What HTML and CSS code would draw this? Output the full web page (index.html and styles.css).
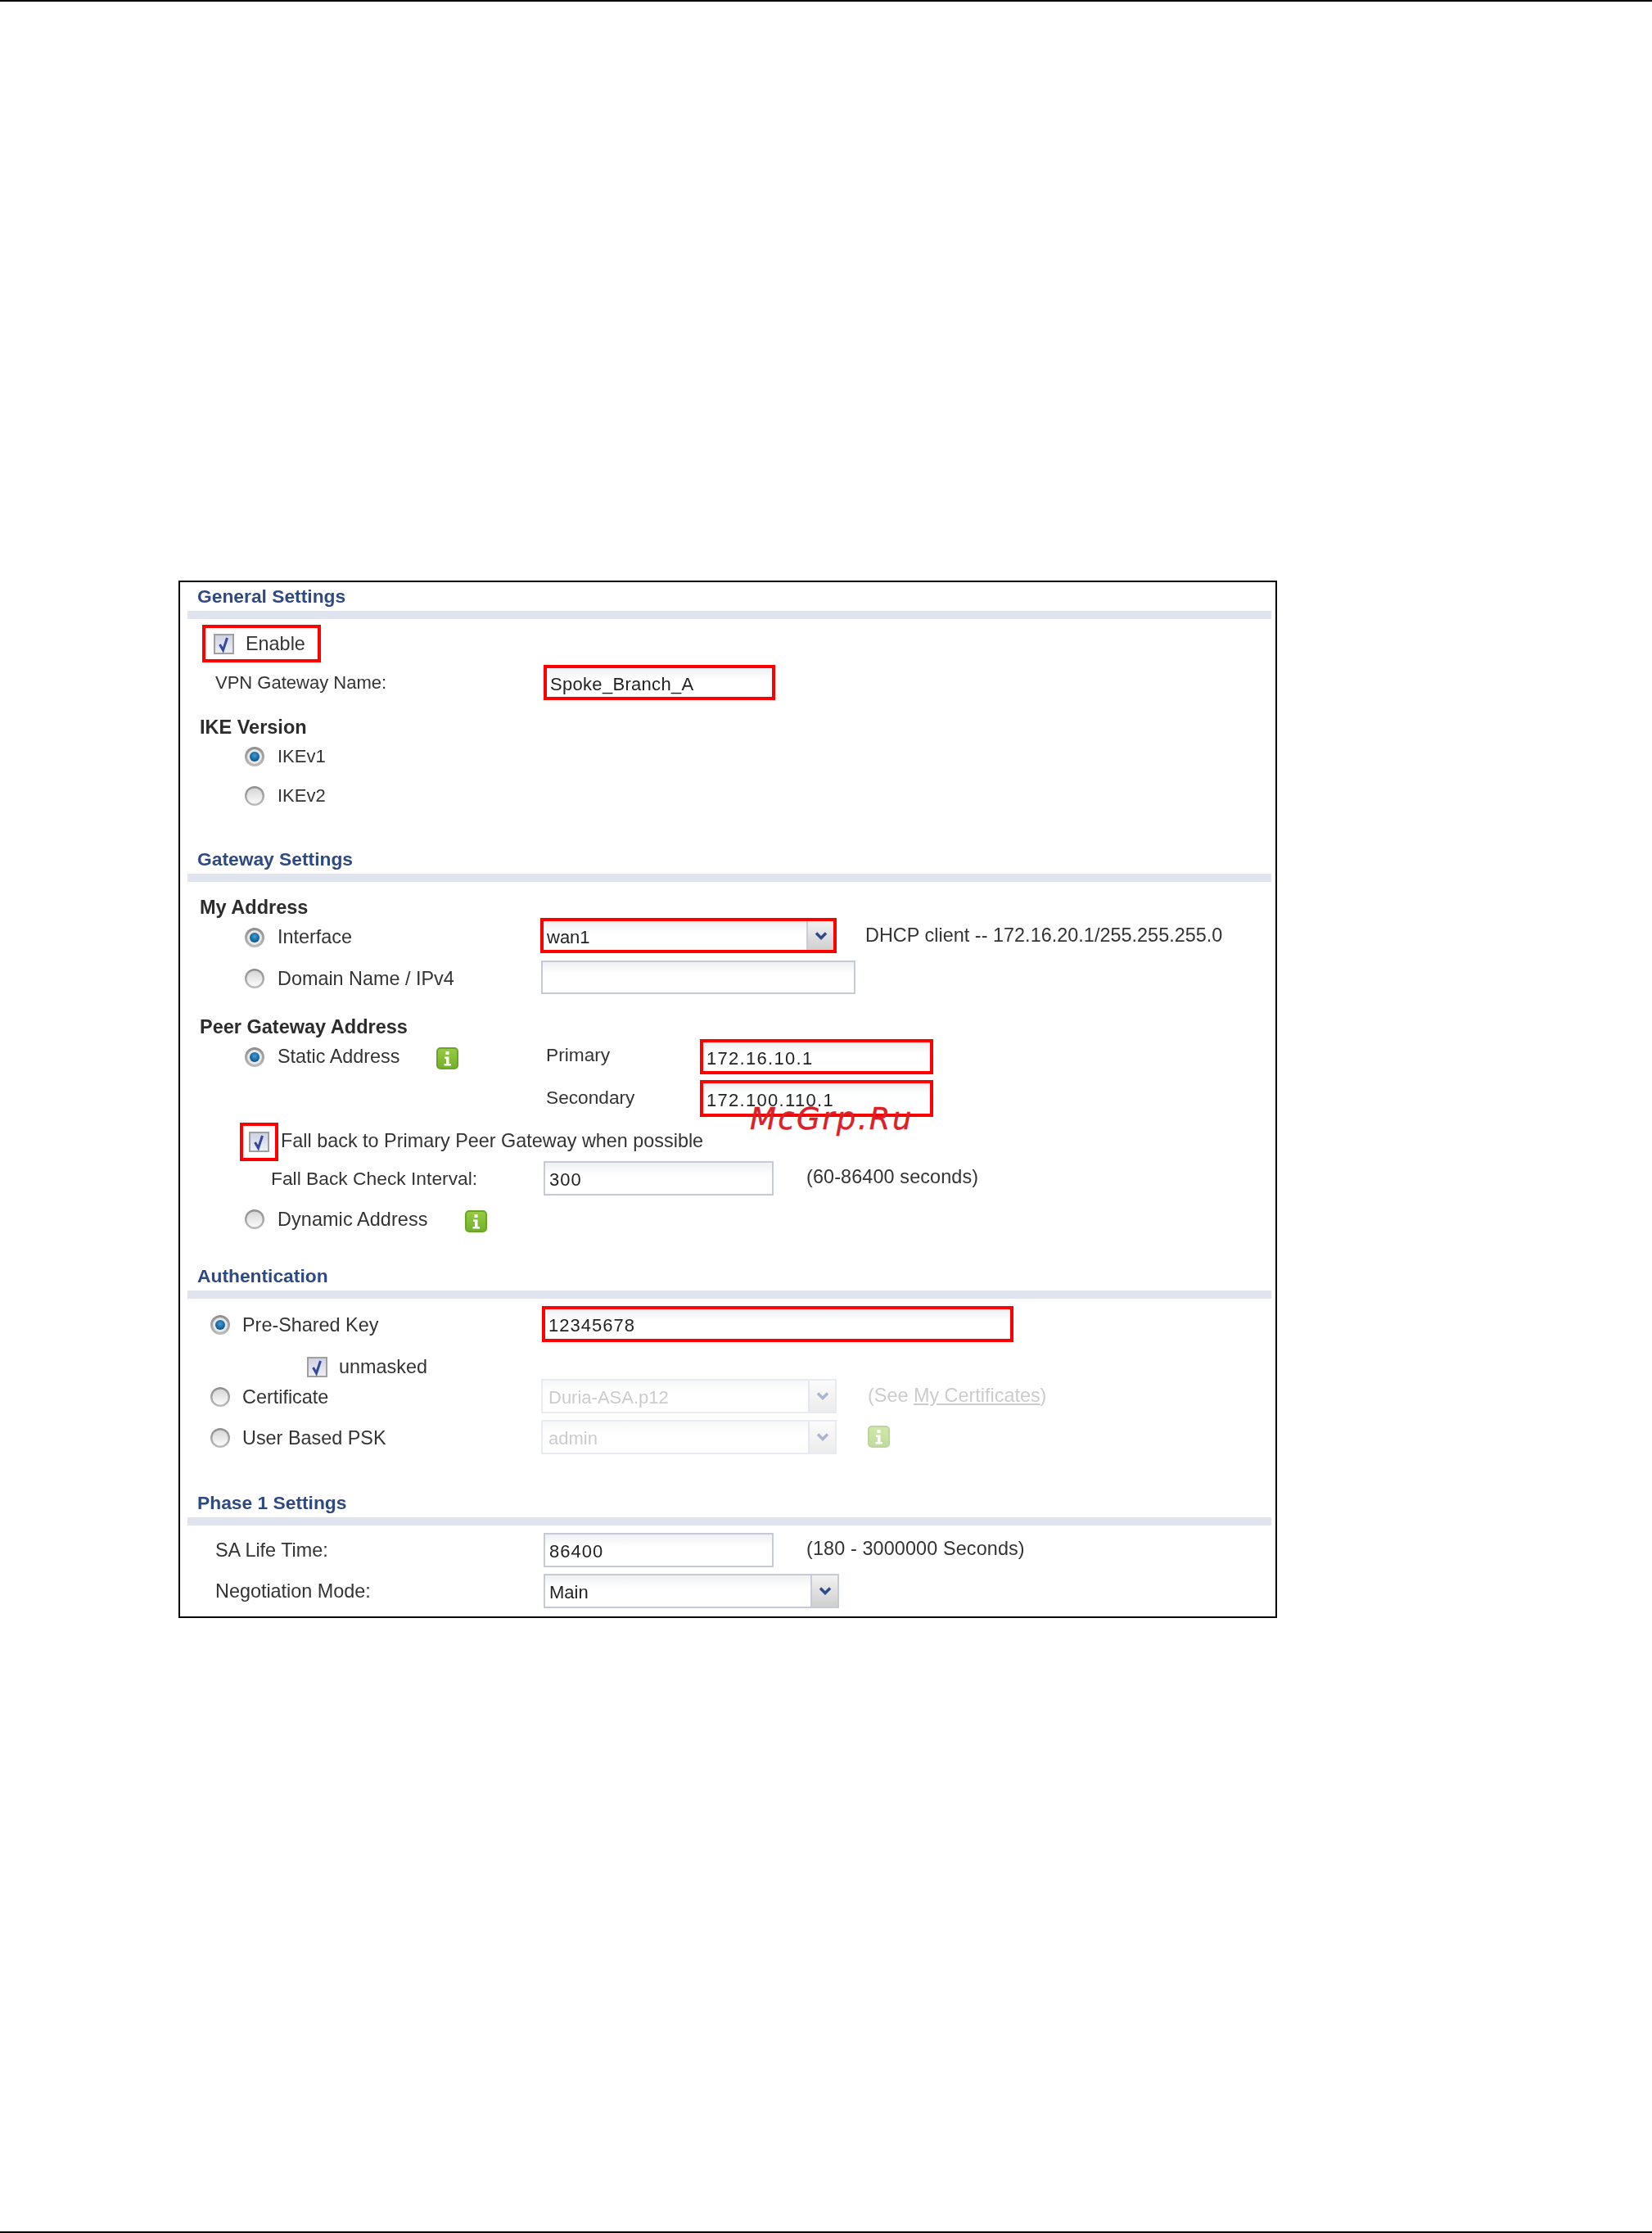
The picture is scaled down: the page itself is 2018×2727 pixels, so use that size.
FILE: index.html
```html
<!DOCTYPE html>
<html lang="en">
<head>
<meta charset="utf-8">
<title>VPN Gateway</title>
<link rel="stylesheet" href="styles.css">
</head>
<body>
<svg class="defs" width="0" height="0" aria-hidden="true">
  <defs>
    <linearGradient id="ringG" x1="0" y1="0" x2="0" y2="1"><stop offset="0" stop-color="#8e8e8e"/><stop offset="1" stop-color="#bcbcbc"/></linearGradient>
    <linearGradient id="faceG" x1="0" y1="0" x2="0" y2="1"><stop offset="0" stop-color="#d6d6d6"/><stop offset="1" stop-color="#fbfbfb"/></linearGradient>
    <radialGradient id="dotG" cx=".5" cy=".4" r=".6"><stop offset="0" stop-color="#3aa2dc"/><stop offset="1" stop-color="#0d4f83"/></radialGradient>
    <linearGradient id="boxG" x1="0" y1="0" x2="0" y2="1"><stop offset="0" stop-color="#cdd1e2"/><stop offset="1" stop-color="#eef0f6"/></linearGradient>
    <linearGradient id="infoG" x1="0" y1="0" x2="0" y2="1"><stop offset="0" stop-color="#98cc44"/><stop offset="1" stop-color="#72b02a"/></linearGradient>
    <symbol id="radio-on" viewBox="0 0 24 24"><circle cx="12" cy="12" r="12" fill="url(#ringG)"/><circle cx="12" cy="12" r="9" fill="#e8e8ea"/><circle cx="12" cy="12" r="6" fill="url(#dotG)"/></symbol>
    <symbol id="radio-off" viewBox="0 0 24 24"><circle cx="12" cy="12" r="12" fill="url(#ringG)"/><circle cx="12" cy="12" r="9.6" fill="url(#faceG)"/></symbol>
    <symbol id="check" viewBox="0 0 25 25"><rect x="1" y="1" width="23" height="23" fill="url(#boxG)" stroke="#a0a0a0" stroke-width="2"/><path d="M7.5 13l4 7L16.5 5" fill="none" stroke="#34489c" stroke-width="3"/></symbol>
    <symbol id="info" viewBox="0 0 27 27"><rect x="1" y="1" width="25" height="25" rx="4" fill="url(#infoG)" stroke="#6ba526" stroke-width="2"/><rect x="11.5" y="5" width="4" height="4" fill="#fff"/><path d="M10 11.5h5.5V20H18v2.5H9.5V20H12v-6h-2z" fill="#fff"/></symbol>
    <symbol id="chev" viewBox="0 0 16 12"><path d="M2 2.5l6 6 6-6" fill="none" stroke="currentColor" stroke-width="3.4"/></symbol>
  </defs>
</svg>
<main class="page">
  <div class="frame">
    <div class="soft">
      <section class="sec first">
        <h2 class="head">General Settings</h2>
        <div class="bar"></div>
        <div class="single r-enable">
          <div class="redbox enable"><svg class="chk"><use href="#check"/></svg><span class="txt s-en">Enable</span></div>
        </div>
        <div class="row r-vpn">
          <div class="c1 i43"><span class="txt s-lab">VPN Gateway Name:</span></div>
          <div class="c2"><div class="field hl low w283 at4"><span class="val s-vpn">Spoke_Branch_A</span></div></div>
        </div>
        <h3 class="sub r-ike">IKE Version</h3>
        <div class="single r-v1 i79"><svg class="rad"><use href="#radio-on"/></svg><span class="txt s-ike">IKEv1</span></div>
        <div class="single r-v2 i79"><svg class="rad"><use href="#radio-off"/></svg><span class="txt s-ike">IKEv2</span></div>
      </section>

      <section class="sec s-gw">
        <h2 class="head">Gateway Settings</h2>
        <div class="bar"></div>
        <h3 class="sub r-my">My Address</h3>
        <div class="row r-if">
          <div class="c1 i79 pad4"><svg class="rad"><use href="#radio-on"/></svg><span class="txt">Interface</span></div>
          <div class="c2">
            <div class="field select hl low w362"><span class="val">wan1</span><span class="arrow"><svg class="chv"><use href="#chev"/></svg></span></div>
            <span class="txt note-dhcp">DHCP client -- 172.16.20.1/255.255.255.0</span>
          </div>
        </div>
        <div class="row r-dom">
          <div class="c1 i79 pad3"><svg class="rad"><use href="#radio-off"/></svg><span class="txt">Domain Name / IPv4</span></div>
          <div class="c2"><div class="field plain w384 at1"></div></div>
        </div>
        <h3 class="sub r-peer">Peer Gateway Address</h3>
        <div class="row r-st">
          <div class="c1 i79"><svg class="rad"><use href="#radio-on"/></svg><span class="txt">Static Address</span><svg class="inf in-st"><use href="#info"/></svg></div>
          <div class="c2 pair"><span class="txt plab">Primary</span><div class="field hl low w285"><span class="val ip">172.16.10.1</span></div></div>
        </div>
        <div class="row r-sec">
          <div class="c1"></div>
          <div class="c2 pair"><span class="txt plab lab2">Secondary</span><div class="field hl low w285"><span class="val ip">172.100.110.1</span></div></div>
        </div>
        <div class="single r-fb">
          <div class="redbox fall"><svg class="chk"><use href="#check"/></svg></div>
          <span class="txt s-fb">Fall back to Primary Peer Gateway when possible</span>
        </div>
        <div class="row r-int">
          <div class="c1 i111"><span class="txt s-fbi">Fall Back Check Interval:</span></div>
          <div class="c2"><div class="field plain w281 at4"><span class="val num">300</span></div><span class="txt note-r">(60-86400 seconds)</span></div>
        </div>
        <div class="single r-dyn i79"><svg class="rad"><use href="#radio-off"/></svg><span class="txt s-dyn">Dynamic Address</span><svg class="inf in-dy"><use href="#info"/></svg></div>
      </section>

      <section class="sec s-auth">
        <h2 class="head">Authentication</h2>
        <div class="bar"></div>
        <div class="row r-psk">
          <div class="c1 i37 pad2"><svg class="rad rad15"><use href="#radio-on"/></svg><span class="txt">Pre-Shared Key</span></div>
          <div class="c2"><div class="field hl w576 at2"><span class="val num">12345678</span></div></div>
        </div>
        <div class="single r-un"><svg class="chk"><use href="#check"/></svg><span class="txt s-un">unmasked</span></div>
        <div class="row r-cert">
          <div class="c1 i37 pad2"><svg class="rad rad15"><use href="#radio-off"/></svg><span class="txt">Certificate</span></div>
          <div class="c2">
            <div class="field select off w361 at1"><span class="val">Duria-ASA.p12</span><span class="arrow"><svg class="chv"><use href="#chev"/></svg></span></div>
            <span class="txt dim note-see">(See <a class="lnk">My Certificates</a>)</span>
          </div>
        </div>
        <div class="row r-user">
          <div class="c1 i37 pad2"><svg class="rad rad15"><use href="#radio-off"/></svg><span class="txt">User Based PSK</span></div>
          <div class="c2">
            <div class="field select off w361 at1"><span class="val">admin</span><span class="arrow"><svg class="chv"><use href="#chev"/></svg></span></div>
            <svg class="inf faded"><use href="#info"/></svg>
          </div>
        </div>
      </section>

      <section class="sec s-ph">
        <h2 class="head">Phase 1 Settings</h2>
        <div class="bar"></div>
        <div class="row r-sa">
          <div class="c1 i43"><span class="txt">SA Life Time:</span></div>
          <div class="c2"><div class="field plain w281 at4"><span class="val num">86400</span></div><span class="txt note-r">(180 - 3000000 Seconds)</span></div>
        </div>
        <div class="row r-neg">
          <div class="c1 i43"><span class="txt">Negotiation Mode:</span></div>
          <div class="c2"><div class="field select plain w361 at4"><span class="val">Main</span><span class="arrow"><svg class="chv"><use href="#chev"/></svg></span></div></div>
        </div>
      </section>
    </div>
    <div class="mark">McGrp.Ru</div>
  </div>
</main>
</body>
</html>
```

FILE: styles.css
```css
* { box-sizing: border-box; }
html, body { margin: 0; background: #fff; }
.defs { display: block; height: 0; }
.page {
  height: 2727px;
  border-top: 2px solid #000;
  border-bottom: 2px solid #000;
  padding: 707px 0 0 218px;
  font-family: "Liberation Sans", Arial, sans-serif;
  font-size: 23.4px;
  color: #333;
}
.frame {
  position: relative;
  width: 1342px;
  border: 2px solid #000;
  padding-bottom: 10px;
}
.soft { filter: blur(.55px); }
.head {
  margin: 0;
  height: 35px;
  padding-left: 21px;
  display: flex;
  align-items: center;
  font-size: 22.8px;
  font-weight: 700;
  color: #2f4a82;
}
.bar { height: 10px; margin: 0 5px 0 9px; background: #e0e4ee; }
.sub {
  margin: 0;
  padding-left: 24px;
  display: flex;
  align-items: center;
  font-size: 23.5px;
  font-weight: 700;
  color: #2c2c2c;
}
.row {
  display: grid;
  grid-template-columns: 440px 1fr;
  grid-template-rows: 100%;
}
.single { display: flex; align-items: center; }
.c1, .c2 { display: flex; align-items: center; height: 100%; }
.txt { white-space: nowrap; }
.val { white-space: nowrap; color: #222; font-size: 22px; }
.num { letter-spacing: 1px; }
.ip { letter-spacing: 1.3px; }
.s-vpn { letter-spacing: .3px; }
.s-lab, .s-ike { font-size: 22px; }
.s-fbi { font-size: 22.8px; }
.s-dyn { letter-spacing: .1px; }
.rad { width: 24px; height: 24px; flex: none; margin-right: 16px; }
.rad15 { margin-right: 15px; }
.chk { width: 25px; height: 25px; flex: none; }
.inf { width: 27px; height: 27px; flex: none; }

.i37 { padding-left: 37px; }
.i43 { padding-left: 43px; }
.i79 { padding-left: 79px; }
.i111 { padding-left: 111px; }
.pad2 { padding-top: 2px; }
.pad3 { padding-top: 3px; }
.pad4 { padding-top: 4px; }

.field {
  height: 100%;
  display: flex;
  align-items: center;
  padding-top: 3px;
  flex: none;
}
.low { padding-top: 5px; }
.plain {
  border: 2px solid #c6c9d6;
  padding-left: 5px;
  background: linear-gradient(#eef0f2, #fff 40%);
}
.hl {
  border: 4px solid #f00;
  padding-left: 4px;
  background: linear-gradient(#eef0f2, #fff 40%);
}
.off {
  border: 2px solid #e9ebf2;
  padding-left: 7px;
  background: linear-gradient(#f6f7f8, #fff 40%);
}
.off .val { color: #ccc; }
.select { padding-right: 0; }
.arrow {
  margin-left: auto;
  align-self: stretch;
  margin-top: -3px;
  width: 33px;
  flex: none;
  display: flex;
  align-items: center;
  justify-content: center;
  border-left: 2px solid #c9ccd8;
  background: linear-gradient(#f2f2f2, #cfcfcf);
  color: #2c4a86;
}
.low .arrow { margin-top: -5px; }
.off .arrow {
  border-left-color: #e6e8ef;
  background: linear-gradient(#fbfbfb, #ececec);
  color: #a9b4cf;
}
.chv { width: 16px; height: 12px; }
.w281 { width: 281px; }
.w283 { width: 283px; }
.w285 { width: 285px; }
.w361 { width: 361px; }
.w362 { width: 362px; }
.w384 { width: 384px; }
.w576 { width: 576px; }
.at1 { margin-left: 1px; }
.at2 { margin-left: 2px; }
.at4 { margin-left: 4px; }

.sec.s-gw { margin-top: 45px; }
.sec.s-auth { margin-top: 37px; }
.sec.s-ph { margin-top: 42px; }

.r-enable { margin-top: 7px; padding-left: 27px; }
.redbox { border: 4px solid #f00; display: flex; align-items: center; }
.enable { width: 145px; height: 46px; padding-left: 10px; }
.s-en { margin-left: 14px; }
.r-vpn { margin-top: 3px; height: 43px; }
.r-ike { margin-top: 18px; height: 30px; }
.r-v1 { margin-top: 6px; height: 30px; }
.r-v2 { margin-top: 18px; height: 30px; }

.r-my { margin-top: 18px; height: 26px; }
.r-if { height: 43px; }
.note-dhcp { margin-left: 35px; letter-spacing: .03px; }
.r-dom { margin-top: 9px; height: 41px; }
.r-peer { margin-top: 26px; height: 29px; }
.r-st { height: 43px; }
.r-sec { margin-top: 7px; height: 45px; }
.pair { padding-left: 7px; }
.plab { width: 188px; margin-bottom: 4px; flex: none; font-size: 22.7px; }
.lab2 { margin-bottom: 2px; }
.in-st { margin-left: 44px; margin-top: 4px; }
.r-fb { margin-top: 7px; height: 47px; padding-left: 73px; }
.fall { width: 47px; height: 47px; padding-left: 7px; }
.s-fb { margin-left: 3px; margin-bottom: 3px; }
.r-int { height: 42px; }
.note-r { margin-left: 40px; margin-bottom: 4px; letter-spacing: .12px; }
.r-dyn { margin-top: 14px; height: 30px; }
.in-dy { margin-left: 45px; margin-top: 5px; }

.r-psk { margin-top: 9px; height: 44px; }
.r-un { margin-top: 16px; height: 28px; padding-left: 155px; }
.s-un { margin-left: 14px; }
.r-cert { margin-top: 1px; height: 42px; }
.r-user { margin-top: 8px; height: 42px; }
.dim { color: #ccc; }
.lnk { text-decoration: underline; }
.note-see { margin-left: 38px; margin-bottom: 2px; }
.faded { opacity: .45; margin-left: 38px; margin-bottom: 2px; }

.r-sa { margin-top: 9px; height: 42px; }
.r-neg { margin-top: 8px; height: 42px; }

.mark {
  position: absolute;
  left: 696px;
  top: 634px;
  font-family: "DejaVu Sans", sans-serif;
  font-style: italic;
  font-size: 37px;
  letter-spacing: 2.4px;
  color: #d92127;
  -webkit-text-stroke: .4px #d92127;
  line-height: 1.2;
}
```
